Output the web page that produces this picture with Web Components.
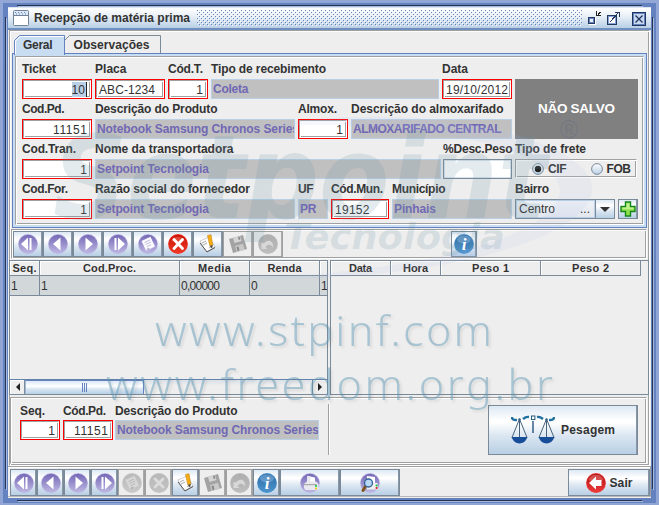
<!DOCTYPE html>
<html lang="pt-BR">
<head>
<meta charset="utf-8">
<title>Recepção de matéria prima</title>
<style>
html,body{margin:0;height:505px;overflow:hidden;background:#93a7d6}
body{font:bold 12px "Liberation Sans",Arial,sans-serif;color:#333;width:659px}
</style>
</head>
<body>
<reception-window></reception-window>
<script>
const define = (name, html, init) => customElements.define(name, class extends HTMLElement {
  connectedCallback() {
    if (this.shadowRoot) return;
    this.attachShadow({mode: 'open'}).innerHTML = typeof html === 'function' ? html(this) : html;
    if (init) init(this, this.shadowRoot);
  }
});
const ETCH = 'border:1px solid;border-color:#a0a0a0 #fff #fff #a0a0a0;box-shadow:inset 1px 1px #fff,inset -1px -1px #a0a0a0;box-sizing:border-box;';
const STEEL = 'linear-gradient(#dde8f3,#fff 30%,#fff 34%,#dbe6f1 62%,#b8cfe5)';

/* Text tracked to an exact advance width given by w. */
define('tracked-text', '<style>:host{display:inline-block;white-space:pre;line-height:16px}span{display:inline-block}</style><span><slot></slot></span>', (el, root) => {
  const s = root.querySelector('span'), n = el.textContent.length;
  const w = +el.getAttribute('w');
  if (w) {
    s.style.letterSpacing = ((w - s.getBoundingClientRect().width) / Math.max(1, n - 1)) + 'px';
    el.style.width = w + 'px';
  }
});

/* Icons */
let uid = 0;
const disc = (a, b, body) => { const i = 'g' + uid++; return `<svg viewBox="0 0 20 20"><defs><linearGradient id="${i}" x2="0" y2="1"><stop stop-color="${a}"/><stop offset="1" stop-color="${b}"/></linearGradient></defs><circle cx="10" cy="10" r="9.9" fill="${b}"/><circle cx="10" cy="10" r="9.300" fill="url(#${i})"/>${body}</svg>`; };
const P = ['#7468b6', '#bdb7e2'];
const sheet = (f, l) => `<path d="M3.500 7L12.500 2.800L17 12.500L8.200 17Z" fill="${f}"/><path d="M6.500 8.500l5.500-2.500M7.500 10.500l5.500-2.500M9 12.500l4-1.800" stroke="${l}" stroke-width=".9"/><path d="M8.200 17l1.300-3.500 3 1.300z" fill="${l}"/>`;
const floppy = `<svg viewBox="0 0 20 20"><path d="M1 5L15 1L19 15L5 19Z" fill="#a3a3a3"/><path d="M5 4l7-2 1.500 5-7 2z" fill="#d5d5d5"/><path d="M7 12l8-2.300 1.700 6-8 2.300z" fill="#c9c9c9"/><path d="M8.500 13l2-.6 1 4-2 .6z" fill="#888"/><path d="M10 3l1.500-.4.8 3-1.500.4z" fill="#888"/></svg>`;
const ICONS = {
  first: () => disc(...P, '<path d="M10 3.500v13L3 10zM11.500 4h2v12h-2z" fill="#fff"/>'),
  prev: () => disc(...P, '<path d="M12.500 3.500v13L5 10z" fill="#fff"/>'),
  next: () => disc(...P, '<path d="M7.500 3.500v13l7.500-6.500z" fill="#fff"/>'),
  last: () => disc(...P, '<path d="M10 3.500v13l7-6.500zM6.500 4h2v12h-2z" fill="#fff"/>'),
  doc: () => disc(...P, sheet('#fafaff', '#b9b5d5')),
  docOff: () => disc('#b9b9b9', '#c9c9c9', sheet('#d6d6d6', '#b5b5b5')),
  cancel: () => disc('#c81208', '#f03a26', '<path d="M3 7a8 8 0 0 1 14 0q-7 3-14 0z" fill="#f4705c" opacity=".5"/><path d="M6 5.500l8.500 9M14.500 5.500L6 14.500" stroke="#fff" stroke-width="2.800" stroke-linecap="round"/>'),
  cancelOff: () => disc('#b8b8b8', '#c3c3c3', '<path d="M6 6l8 8M14 6l-8 8" stroke="#dcdcdc" stroke-width="2.800" stroke-linecap="round"/>'),
  edit: () => `<svg viewBox="0 0 20 20"><path d="M2 7L11 3L17 13L8 18Z" fill="#fff" stroke="#b9b9b9" stroke-width=".7"/><path d="M2 9l7 9 8-4.500" fill="none" stroke="#555" stroke-width="1"/><path d="M4 9l4-2M5 11l4-2M11 14l3-1.500" stroke="#aaa"/><path d="M9.500 1.500l3.500-.8 1.800 10.300-3 1z" fill="#f6ad16" stroke="#b97800" stroke-width=".5"/><path d="M11.800 12l3-1-.7 3.500z" fill="#444"/></svg>`,
  saveOff: () => floppy,
  undoOff: () => disc('#aeaeae', '#bdbdbd', '<path d="M3.500 9V15H9.500L7.500 13C8.500 10 13 9.500 15 13.500C16 7 10 4.500 6 9.500Z" fill="#d8d8d8"/>'),
  info: () => disc('#2e6ca8', '#4b93cc', '<ellipse cx="10" cy="5.500" rx="7" ry="4" fill="#9fc8e8" opacity=".4"/><text x="10" y="16" text-anchor="middle" font-family="Liberation Serif,serif" font-style="italic" font-weight="bold" font-size="17" fill="#fff">i</text>'),
  print: () => disc(...P, '<path d="M7 3l8 1.500v6l-8-1.500z" fill="#fff"/><path d="M7 3l4 .500-1 6-3-.500z" fill="#e7e7f2"/><path d="M4 11l3-2.500h9l2.500 2.500v5L16 17H5.500L4 15z" fill="#e8e8ee"/><path d="M4 11h13v1.200H4z" fill="#aaa"/><circle cx="16" cy="13" r="1" fill="#0c3"/><circle cx="16" cy="15.500" r="1" fill="#f7c300"/>'),
  preview: () => disc(...P, '<path d="M7 3l8 1v6H7z" fill="#fff"/><path d="M6 10h11.500v6.500H7z" fill="#eee"/><path d="M6 12.500L3 17.500" stroke="#80531f" stroke-width="3" stroke-linecap="round"/><circle cx="8.500" cy="10" r="4" fill="#b7d8f4" stroke="#36659b" stroke-width="1.400"/><circle cx="16.500" cy="12.500" r="1" fill="#0c3"/><circle cx="16.500" cy="15" r="1" fill="#f01010"/>'),
  exit: () => disc('#b01010', '#ee3a3a', '<path d="M2.500 7a8 8 0 0 1 15 0q-7 3-15 0z" fill="#e88" opacity=".5"/><path d="M3 10l7-6.500v3.500h5.500v6H10v3.500z" fill="#fff"/>'),
  plus: () => `<svg viewBox="0 0 16 16"><path d="M5.500 1h5v4.500H15v5h-4.500V15h-5v-4.500H1v-5h4.500z" fill="#8fe04a" stroke="#11871b" stroke-width="1.400"/><path d="M6.500 2.200h3v4.400h4v1.600H2.500V6.600h4z" fill="#cdf5a4" opacity=".8"/></svg>`,
  scales: () => `<svg viewBox="0 0 44 30"><g fill="none" stroke="#22709f" stroke-width="2.400"><path d="M1 2q0 3.500 5 3M43 2q0 3.500-5 3M12 4q3-2.500 6-2M32 4q-3-2.500-6-2"/></g><path d="M22 6v12" stroke="#25557e" stroke-width="1.400"/><rect x="20.500" y="1" width="3.400" height="3.600" fill="#fff" stroke="#24597f" stroke-width="1"/><circle cx="8.500" cy="4.500" r="1.200" fill="#175c8f"/><circle cx="35.500" cy="4.500" r="1.200" fill="#175c8f"/><g fill="none" stroke="#48617a" stroke-width="1"><path d="M8.500 4L1 22.500M8.500 4L16 22.500M8.500 4v18.500M35.500 4L28 22.500M35.500 4L43 22.500M35.500 4v18.500"/></g><path d="M.5 22h16q-2.500 6.500-8 6.500T.5 22zM27.500 22h16q-2.500 6.500-8 6.500t-8-6.500z" fill="#174d99"/></svg>`
};
define('ui-icon', el => `<style>:host{display:block;width:20px;height:20px;flex:none}svg{display:block;width:100%;height:100%}</style>${ICONS[el.getAttribute('name')]()}`);

define('tool-button', el => `<style>:host{display:flex;align-items:center;justify-content:center;box-sizing:border-box;border:1px solid #7a8a99;background:${STEEL};box-shadow:inset -1px 0 #8797a8;flex:none}
:host([off]){background:#eee;border-color:#a0a0a0;box-shadow:inset -1px 0 #aaa}</style><slot></slot>`);

define('text-field', el => `<style>:host{display:flex;align-items:center;box-sizing:border-box;height:20px;width:${el.getAttribute('w')}px;flex:none;border:1px solid #f00;background:#fff;font-weight:normal}
div{${ETCH}width:100%;height:100%;display:flex;align-items:center;padding:1px 3px 0 2px;overflow:hidden}
:host([num]) div{justify-content:flex-end;padding-right:3px}
:host([ro]){background:#c0c0c0;border:1px solid #b8cfe5;color:#7068b4;font-weight:bold}
:host([ro]) div{border:0;box-shadow:none;padding:0 1px}
:host([plain]){border:1px solid #7a8a99;background:#fff}
:host([plain]) div{border:1px solid #d8e2ec;box-shadow:none}</style><div><slot></slot></div>`);

/* A caption stacked over its control. */
define('form-item', el => `<style>:host{display:flex;flex-direction:column;flex:none;width:${el.getAttribute('w')}px;height:40px}
header{height:var(--caption-height,18px);white-space:nowrap;overflow:visible}</style><header><tracked-text w="${el.getAttribute('cw')}">${el.getAttribute('caption')}</tracked-text></header><slot></slot>`);

define('radio-dot', `<style>:host{display:block;width:12px;height:12px;flex:none}svg{display:block}</style><svg width="12" height="12" viewBox="0 0 12 12"><defs><linearGradient id="r" x2="0" y2="1"><stop stop-color="#fff"/><stop offset="1" stop-color="#b8cfe5"/></linearGradient></defs><circle cx="6" cy="6" r="5.400" fill="url(#r)" stroke="#7a8a99"/><circle id="d" cx="6" cy="6" r="3.200" fill="#222"/></svg>`, (el, r) => { if (!el.hasAttribute('on')) r.querySelector('#d').remove(); });

define('title-bar', `<style>:host{display:flex;align-items:center;height:23px;box-sizing:border-box;padding:0 2px 0 5px;background:linear-gradient(#fff,#e9f0f7 40%,#b8cfe5);border-top:1px solid #dce6f3;border-bottom:2px solid #6f8fc0;color:#333}
.b{flex:1;height:16px;margin:0 3px 0 7px}.i{margin-right:5px}svg{display:block;flex:none}</style>
<svg class="i" width="16" height="16"><rect x=".5" y=".5" width="15" height="15" rx="1" fill="#fff" stroke="#72839a"/><path d="M1 5.500h14" stroke="#72839a"/><rect x="1" y="1" width="14" height="4" fill="#dfe9f5"/><path d="M2 2.500h12M3 4h11" stroke="#6382bf" stroke-dasharray="1 2"/></svg>
<tracked-text w="156">Recepção de matéria prima</tracked-text>
<svg class="b" height="16"><defs><pattern id="p" width="4" height="4" patternUnits="userSpaceOnUse"><path d="M0 0h1v1H0zM2 2h1v1H2z" fill="#6382bf"/><path d="M1 1h1v1H1zM3 3h1v1H3z" fill="#fff"/></pattern></defs><rect width="100%" height="16" fill="url(#p)"/></svg>
<svg width="64" height="18" shape-rendering="crispEdges" fill="none"><path d="M3.500 8.500h6v6h-6z" fill="#e8f0fa" stroke="#23395f"/><path d="M4.500 9.500h4v4h-4z" stroke="#6382bf"/><path d="M4 15.500h7M10.500 9v7" stroke="#fff"/><path d="M11.500 2v4h4M12.500 5.500h1v-1h1v-1h1v-1" stroke="#222"/>
<path d="M22.500 6.500h9v9h-9z" fill="#fff" stroke="#23395f"/><path d="M23.500 7.500h7v7h-7z" stroke="#89a3d6"/><path d="M25 13l8-9M30 3.500h4v4" stroke="#23395f"/>
<path d="M47.500 3.500h13v13h-13z" fill="#c8d9f1" stroke="#20365c"/><path d="M48.500 4.500h11v11h-11z" stroke="#6382bf"/><path d="M50.500 6.500l7 7M57.500 6.500l-7 7" stroke="#20365c" stroke-width="1.300" shape-rendering="auto"/></svg>`);

define('tab-strip', `<style>:host{display:flex;height:18px}
svg{display:block;position:absolute;left:0;top:0}div{position:relative;height:18px;display:flex;box-sizing:border-box}
.on{z-index:1}tracked-text{position:relative;margin-top:1.5px}</style>
<div class="on" style="width:50px;padding-left:9px"><svg width="51" height="20"><path d="M.5 20V5.500L5.500.5h45V20" fill="#c8ddf2" stroke="#6382bf"/><path d="M1.500 19V6l5-4.500H50" fill="none" stroke="#fff"/></svg><tracked-text w="29.500">Geral</tracked-text></div>
<div style="width:97px;padding-left:9.500px"><svg width="97" height="18"><path d="M.5 5.500L5.500.5h91V18" fill="#eee" stroke="#7a8a99"/></svg><tracked-text w="76">Observações</tracked-text></div>`);

define('combo-box', `<style>:host{display:flex;width:100px;height:20px;box-sizing:border-box;border:1px solid #7a8a99;background:linear-gradient(#eef1f5,#e3e8ee);font-weight:normal}
.t{flex:1;display:flex;justify-content:space-between;align-items:center;padding:0 4px 0 2px;border:1px solid #b8cfe5}
.a{width:18px;border-left:1px solid #7a8a99;background:${STEEL};display:flex;align-items:center;justify-content:center}</style>
<div class="t"><tracked-text w="36">Centro</tracked-text><tracked-text w="10">...</tracked-text></div><div class="a"><svg width="10" height="5"><path d="M0 0h10L5 5z" fill="#333"/></svg></div>`);

define('reception-form', `<style>:host{display:block;border:1px solid #6382bf;background:#c8ddf2;padding:2px;box-sizing:border-box;width:635px;height:175px;position:relative}
.p{${ETCH}background:#eee;height:169px;width:629px;display:flex;gap:3px;padding:4px 0 0 6px}
.l{width:490px}.row{display:flex;gap:3px}.r{width:123px}
.s{margin-top:18px;height:60px;background:#808080;color:#fff;font-size:13.500px;display:flex;align-items:center;justify-content:center;margin-bottom:2px}
.f{${ETCH}height:19px;width:122px;display:flex;align-items:center;padding-left:16px}
.sel{background:#b8cfe5;padding:0 1px 0 0;border-right:1px solid #222}</style>
<div class="p"><div class="l">
<div class="row"><form-item w="70" caption="Ticket" cw="34"><text-field w="70" num><tracked-text class="sel" w="13.500">10</tracked-text></text-field></form-item>
<form-item w="70" caption="Placa" cw="31.500"><text-field w="70"><tracked-text w="56">ABC-1234</tracked-text></text-field></form-item>
<form-item w="40" caption="Cód.T." cw="35"><text-field w="40" num>1</text-field></form-item>
<form-item w="228" caption="Tipo de recebimento" cw="115"><text-field w="228" ro><tracked-text w="35.500">Coleta</tracked-text></text-field></form-item>
<form-item w="70" caption="Data" cw="26"><text-field w="70"><tracked-text w="62">19/10/2012</tracked-text></text-field></form-item></div>
<div class="row"><form-item w="70" caption="Cod.Pd." cw="42.500"><text-field w="70" num><tracked-text w="34">11151</tracked-text></text-field></form-item>
<form-item w="200" caption="Descrição do Produto" cw="122.500"><text-field w="200" ro><tracked-text w="202">Notebook Samsung Chronos Series</tracked-text></text-field></form-item>
<form-item w="50" caption="Almox." cw="39"><text-field w="50" num>1</text-field></form-item>
<form-item w="161" caption="Descrição do almoxarifado" cw="152.500"><text-field w="161" ro><tracked-text w="148.500">ALMOXARIFADO CENTRAL</tracked-text></text-field></form-item></div>
<div class="row"><form-item w="70" caption="Cod.Tran." cw="54"><text-field w="70" num>1</text-field></form-item>
<form-item w="345" caption="Nome da transportadora" cw="138.500"><text-field w="346" ro><tracked-text w="112">Setpoint Tecnologia</tracked-text></text-field></form-item>
<form-item w="69" caption="%Desc.Peso" cw="69.500"><text-field w="69" plain></text-field></form-item></div>
<div class="row"><form-item w="70" caption="Cod.For." cw="46"><text-field w="70" num>1</text-field></form-item>
<form-item w="200" caption="Razão social do fornecedor" cw="155"><text-field w="200" ro><tracked-text w="112">Setpoint Tecnologia</tracked-text></text-field></form-item>
<form-item w="30" caption="UF" cw="15.500"><text-field w="30" ro><tracked-text w="16.500">PR</tracked-text></text-field></form-item>
<form-item w="58" caption="Cód.Mun." cw="52"><text-field w="58"><tracked-text w="34.500">19152</tracked-text></text-field></form-item>
<form-item w="120" caption="Município" cw="53.500"><text-field w="120" ro><tracked-text w="42">Pinhais</tracked-text></text-field></form-item></div>
</div><div class="r"><div class="s"><tracked-text w="77">NÃO SALVO</tracked-text></div>
<form-item w="123" caption="Tipo de frete" cw="71"><div class="f"><radio-dot on></radio-dot><tracked-text w="18.500" style="margin:0 23px 0 4px">CIF</tracked-text><radio-dot style="margin-left:1px"></radio-dot><tracked-text w="24.500" style="margin-left:4px">FOB</tracked-text></div></form-item>
<form-item w="123" caption="Bairro" cw="34"><div style="display:flex;gap:3px"><combo-box></combo-box><tool-button style="width:20px;height:20px"><ui-icon name="plus" style="width:16px;height:16px"></ui-icon></tool-button></div></form-item></div></div>`);

define('item-toolbar', `<style>:host{${ETCH}display:flex;align-items:center;width:636px;height:30px;padding:0 1px}
tool-button{width:30px;height:26px}</style>` +
['first','prev','next','last','doc','cancel','edit'].map(n => `<tool-button><ui-icon name="${n}"></ui-icon></tool-button>`).join('') +
['saveOff','undoOff'].map(n => `<tool-button off><ui-icon name="${n}"></ui-icon></tool-button>`).join('') +
`<tool-button style="width:26px;margin-left:168px"><ui-icon name="info"></ui-icon></tool-button>`);

define('data-table', el => {
  const cols = JSON.parse(el.getAttribute('cols')), rows = JSON.parse(el.getAttribute('rows') || '[]');
  const g = cols.map(c => c[2] + 'px').join(' ');
  return `<style>:host{display:flex;flex-direction:column;box-sizing:border-box;border:1px solid #7a8a99;overflow:hidden;font-size:11px}
.h,.r{display:grid;grid-template-columns:${g}}.h{height:15px}.h div{border-right:1px solid #7a8a99;border-bottom:1px solid #7a8a99;box-shadow:inset 1px 1px #fff;display:flex;justify-content:center;align-items:center;overflow:hidden}
.r{height:20px;background:#d2d7da;font-weight:normal;font-size:12px}.r div{border-right:1px solid #7a8a99;border-bottom:1px solid #7a8a99;padding:2px 0 0 1px;overflow:hidden}
.f{flex:1}</style><div class="h">${cols.map(c => `<div>${c[0] ? `<tracked-text w="${c[1]}">${c[0]}</tracked-text>` : ''}</div>`).join('')}</div>
${rows.map(r => `<div class="r">${r.map(c => `<div><tracked-text w="${c[1] || ''}">${c[0]}</tracked-text></div>`).join('')}</div>`).join('')}<div class="f"></div><slot></slot>`;
});

define('h-scrollbar', `<style>:host{display:flex;height:15px;box-sizing:border-box;border-top:1px solid #6382a8;background:linear-gradient(#d9e0e8,#eee 40%)}
div{box-sizing:border-box;display:flex;align-items:center;justify-content:center}
.b{width:15px;background:#eee;border-right:1px solid #7a8a99;border-left:1px solid #fff;box-shadow:inset 0 1px #fff}.t{width:119px;background:linear-gradient(#dce8f5,#fff 40%,#d6e4f2 65%,#b8cfe5);border:1px solid #6382bf;border-bottom:0;border-left-color:#a3b8d8}svg{display:block}</style>
<div class="b"><svg width="4" height="8"><path d="M4 0v8L0 4z" fill="#222"/></svg></div><div class="t"><svg width="6" height="9"><path d="M.5 0v9M2.500 0v9M4.500 0v9" stroke="#6382bf"/></svg></div><div style="flex:1"></div><div class="b" style="border-left:1px solid #7a8a99;border-right:0"><svg width="4" height="8"><path d="M0 0v8l4-4z" fill="#222"/></svg></div>`);

define('weighing-panel', `<style>:host{${ETCH}display:flex;width:637px;height:67px;padding:5px 7px 0 9px;--caption-height:17px}
.v{width:1px;height:51px;background:#a0a0a0;border-right:1px solid #fff;margin:1px 158px 0 9px}tool-button{width:150px;height:50px;margin-top:2px;gap:6px}</style>
<form-item w="40" caption="Seq." cw="25" style="margin-right:3px"><text-field w="40" num>1</text-field></form-item>
<form-item w="50" caption="Cód.Pd." cw="43" style="margin-right:3px"><text-field w="50" num><tracked-text w="34">11151</tracked-text></text-field></form-item>
<form-item w="203" caption="Descrição do Produto" cw="122.500" style="margin-left:-1px;margin-right:1px"><text-field w="204" ro><tracked-text w="202">Notebook Samsung Chronos Series</tracked-text></text-field></form-item>
<div class="v"></div>
<tool-button><ui-icon name="scales" style="width:44px;height:30px"></ui-icon><tracked-text w="54">Pesagem</tracked-text></tool-button>`);

define('bottom-bar', `<style>:host{display:flex;height:31px;box-sizing:border-box;padding:2px 0 0 2px;border:1px solid #a0a0a0;border-bottom-color:#b8b8b8;border-left:0;box-shadow:inset 0 1px #fff;width:643px}
tool-button{width:27px;height:27px}.w{width:60px}.x{width:82px;margin-left:auto;gap:4px}</style>` +
[['first'],['prev'],['next'],['last'],['docOff',1],['cancelOff',1],['edit'],['saveOff',1],['undoOff',1],['info']].map(([n, o]) => `<tool-button ${o ? 'off' : ''}><ui-icon name="${n}"></ui-icon></tool-button>`).join('') +
`<tool-button class="w"><ui-icon name="print"></ui-icon></tool-button><tool-button class="w"><ui-icon name="preview"></ui-icon></tool-button>
<tool-button class="x"><ui-icon name="exit"></ui-icon><tracked-text w="23">Sair</tracked-text></tool-button>`);

/* Translucent brand layer over the whole window. */
define('brand-watermark', `<style>:host{position:absolute;inset:0;pointer-events:none;overflow:hidden}svg{display:block}.u{filter:drop-shadow(2px 2px 1px rgba(80,80,80,.25))}</style>
<svg width="659" height="505"><path d="M250 128C420 95 600 140 592 192C586 238 440 285 230 278C420 275 560 235 560 190C555 145 400 115 250 128Z" fill="#b4c4f0" fill-opacity=".13"/>
<g fill="#6e96a5" fill-opacity=".19" font-style="italic" font-weight="bold"><text x="53" y="218" font-family="DejaVu Sans" font-size="116" textLength="494" lengthAdjust="spacingAndGlyphs">Setpoint</text>
<text x="284" y="249" font-family="DejaVu Sans" font-size="36" textLength="221" lengthAdjust="spacingAndGlyphs">Tecnologia</text></g>
<text x="569" y="138" text-anchor="middle" font-family="Liberation Sans" font-weight="normal" font-size="25" fill="#5a6688" fill-opacity=".3">®</text>
<g class="u" fill="#5b96b5" fill-opacity=".46" font-family="Noto Sans" font-weight="300" font-size="43"><text x="155" y="346" textLength="337">www.stpinf.com</text><text x="106" y="400" textLength="447">www.freedom.org.br</text></g></svg>`);

define('reception-window', `<style>:host{display:block;position:relative;width:659px;height:505px;box-sizing:border-box;padding:3px;background:linear-gradient(#93a7d6,#90a5d3)}
.frame{width:653px;height:500px;background:#6382bf;box-sizing:border-box;padding:4px 0 0 5px;position:relative}
.edge{position:absolute;background:#26344f;box-shadow:1px 1px #a6bbe2}
.win{width:643px;background:#eee;height:491px;box-sizing:border-box}
.main{${ETCH}width:641px;height:436px;margin-left:1px;padding-top:4px}
tab-strip{margin-left:4px}reception-form{margin-left:2px}item-toolbar{margin:1px 0 0 1px}
.tables{display:flex;gap:2px;margin:1px 0 2px -1px;height:135px}</style>
<div class="frame"><i class="edge" style="left:14px;top:2px;width:625px;height:1px"></i><i class="edge" style="left:2px;top:14px;width:1px;height:472px"></i><i class="edge" style="right:3px;top:14px;width:1px;height:472px"></i><i class="edge" style="left:14px;top:497px;width:625px;height:1px"></i>
<div class="win"><title-bar></title-bar><div class="main"><tab-strip></tab-strip><reception-form></reception-form><item-toolbar></item-toolbar>
<div class="tables"><data-table style="width:319px" cols='[["Seq.",24,30],["Cod.Proc.",53,140],["Media",33,70],["Renda",34,70],["",0,60]]' rows='[[["1"],["1"],["0,00000",39],["0"],["1"]]]'><h-scrollbar></h-scrollbar></data-table>
<data-table style="width:319px" cols='[["Data",23,60],["Hora",25,50],["Peso 1",37,100],["Peso 2",37,100]]'></data-table></div>
<weighing-panel></weighing-panel></div><bottom-bar></bottom-bar></div></div><brand-watermark></brand-watermark>`);
</script>
</body>
</html>
